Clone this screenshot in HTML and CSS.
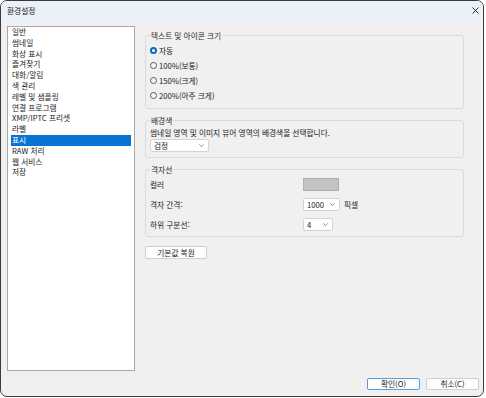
FILE: index.html
```html
<!DOCTYPE html>
<html lang="ko">
<head>
    <meta charset="UTF-8">
    <meta name="viewport" content="width=device-width, initial-scale=1.0">
    <title>환경설정</title>
    <link rel="stylesheet" href="styles.css">
</head>
<body>
    <div class="window">
        <div class="titlebar">
            <span class="title">환경설정</span>
            <svg class="close" width="7" height="7" viewBox="0 0 7 7"><path d="M0.5 0.5L6.5 6.5M6.5 0.5L0.5 6.5" stroke="#2b2b2b" stroke-width="1" fill="none"/></svg>
        </div>
        <div class="dialog">
            <div class="content">
                <ul class="nav">
                    <li>일반</li>
                    <li>썸네일</li>
                    <li>화상 표시</li>
                    <li>즐겨찾기</li>
                    <li>대화/알림</li>
                    <li>색 관리</li>
                    <li>레벨 및 샘플링</li>
                    <li>연결 프로그램</li>
                    <li>XMP/IPTC 프리셋</li>
                    <li>라벨</li>
                    <li class="active">표시</li>
                    <li>RAW 처리</li>
                    <li>웹 서비스</li>
                    <li>저장</li>
                </ul>
                <div class="panel">
                    <fieldset class="group">
                        <legend>텍스트 및 아이콘 크기</legend>
                        <div class="radios">
                            <div class="radio checked"><span class="dot"></span>자동</div>
                            <div class="radio"><span class="dot"></span>100%(보통)</div>
                            <div class="radio"><span class="dot"></span>150%(크게)</div>
                            <div class="radio"><span class="dot"></span>200%(아주 크게)</div>
                        </div>
                    </fieldset>
                    <fieldset class="group">
                        <legend>배경색</legend>
                        <p class="desc">썸네일 영역 및 이미지 뷰어 영역의 배경색을 선택합니다.</p>
                        <div class="select w-bg"><span>검정</span><svg width="5" height="3" viewBox="0 0 5 3"><path d="M0.3 0.3L2.5 2.6L4.7 0.3" stroke="#777" stroke-width="0.8" fill="none"/></svg></div>
                    </fieldset>
                    <fieldset class="group">
                        <legend>격자선</legend>
                        <div class="grid-rows">
                            <span>컬러</span>
                            <div class="swatch"></div>
                            <span>격자 간격:</span>
                            <div class="inline">
                                <div class="select w-1000"><span>1000</span><svg width="5" height="3" viewBox="0 0 5 3"><path d="M0.3 0.3L2.5 2.6L4.7 0.3" stroke="#777" stroke-width="0.8" fill="none"/></svg></div>
                                <span class="unit">픽셀</span>
                            </div>
                            <span>하위 구분선:</span>
                            <div class="select w-4"><span>4</span><svg width="5" height="3" viewBox="0 0 5 3"><path d="M0.3 0.3L2.5 2.6L4.7 0.3" stroke="#777" stroke-width="0.8" fill="none"/></svg></div>
                        </div>
                    </fieldset>
                    <button class="btn reset">기본값 복원</button>
                </div>
            </div>
            <div class="footer">
                <button class="btn default">확인(O)</button>
                <button class="btn">취소(C)</button>
            </div>
        </div>
    </div>
</body>
</html>
```

FILE: styles.css
```css
body { margin: 0; background: #fff; font-family: "Noto Sans CJK KR", "Noto Sans", sans-serif; font-size: 7.7px; color: #1b1b1b; }
.window { box-sizing: border-box; width: 484px; height: 397px; border: 1px solid #3c3c3c; border-radius: 7px; overflow: hidden; background: #f0f0f0; display: flex; flex-direction: column; }
.titlebar { height: 19px; flex: none; display: flex; align-items: center; padding: 0 4px 0 6px; background: #ebf1f9; }
.title { font-size: 7.7px; line-height: 19px; }
.close { margin-left: auto; }
.dialog { flex: 1; display: flex; flex-direction: column; padding: 6px 4px 6px 6px; }
.content { display: flex; gap: 10px; }
.nav { box-sizing: border-box; list-style: none; margin: 0; padding: 0 3px; width: 128px; height: 345px; background: #fff; border: 1px solid #a9a9a9; }
.nav li { line-height: 10.8px; padding-left: 1px; white-space: nowrap; }
.nav li.active { background: #0a74d4; color: #fff; }
.panel { width: 319px; padding-top: 4px; display: flex; flex-direction: column; align-items: flex-start; }
.group { box-sizing: border-box; width: 319px; margin: 0 0 6px 0; border: 1px solid #dadada; border-radius: 3px; padding: 0 5px 5px 4px; }
.group legend { padding: 0 1px; line-height: 11px; color: #2a2a2a; }
.radios { padding-top: 2px; }
.radio { display: flex; align-items: center; height: 15px; gap: 2px; }
.dot { box-sizing: border-box; width: 7px; height: 7px; border-radius: 50%; border: 1px solid #5a5a5a; background: #f7f7f7; }
.radio.checked .dot { border: 2px solid #0a67c2; background: #fff; }
.desc { margin: 1px 0 1px 0; line-height: 11px; }
.select { box-sizing: border-box; height: 13px; display: flex; align-items: center; justify-content: space-between; padding: 0 4px 0 3px; background: #fff; border: 1px solid #d4d4d4; border-radius: 2px; }
.w-bg { width: 59px; }
.w-1000 { width: 37px; }
.w-4 { width: 30px; }
.grid-rows { display: grid; grid-template-columns: 153px auto; row-gap: 7px; align-items: center; padding-top: 3px; }
.swatch { box-sizing: border-box; width: 36px; height: 13px; background: #c3c3c3; border: 1px solid #b0b0b0; }
.inline { display: flex; align-items: center; gap: 4px; }
.btn { box-sizing: border-box; height: 12px; padding: 0; font-family: inherit; font-size: 7.7px; line-height: 10px; color: #1b1b1b; background: #fdfdfd; border: 1px solid #cfcfcf; border-radius: 2px; }
.reset { width: 62px; height: 13px; margin-top: 3px; }
.footer { margin-top: auto; display: flex; justify-content: flex-end; gap: 6px; }
.footer .btn { width: 53px; }
.btn.default { border-color: #5a9be0; }
```
